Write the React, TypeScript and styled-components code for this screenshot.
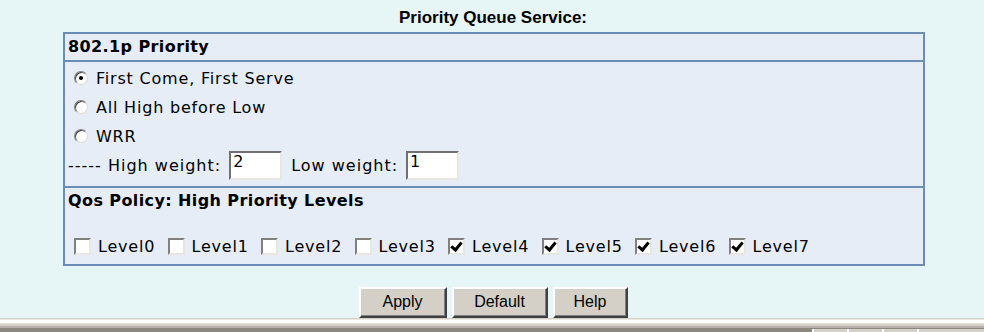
import React from 'react';
import styled, { createGlobalStyle } from 'styled-components';

const GlobalStyle = createGlobalStyle`
    html, body {
        margin: 0;
        padding: 0;
        background: #e6f5f5;
    }
    body {
        font-family: "DejaVu Sans", Verdana, sans-serif;
        font-size: 16px;
        letter-spacing: 0.8px;
        color: #000;
    }
`;

const Page = styled.div`
    width: 984px;
    height: 332px;
    display: flex;
    flex-direction: column;
    overflow: hidden;
`;

const Title = styled.div`
    font-family: "Liberation Sans", Arial, sans-serif;
    font-weight: bold;
    font-size: 17px;
    letter-spacing: 0;
    text-align: center;
    padding-top: 8px;
    height: 33px;
    box-sizing: border-box;
    padding-left: 2px;
`;

const Panel = styled.div`
    margin-left: 63px;
    width: 862px;
    box-sizing: border-box;
    border: 2px solid #6c8cb8;
    background: #e6edf6;
`;

const SectionHead = styled.div<{ $first?: boolean }>`
    font-weight: bold;
    letter-spacing: 0.4px;
    height: 26px;
    display: flex;
    align-items: center;
    padding-left: 3px;
    border-top: ${p => (p.$first ? 'none' : '2px solid #6c8cb8')};
    border-bottom: ${p => (p.$first ? '2px solid #6c8cb8' : 'none')};
`;

const Body = styled.div`
    padding: 2px 0 6px 0;
`;

const Row = styled.label`
    display: flex;
    align-items: center;
    height: 29px;
    padding-left: 9px;
    gap: 8px;
`;

const Radio = styled.input`
    appearance: none;
    width: 14px;
    height: 14px;
    margin: 0;
    border-radius: 50%;
    background: #fff;
    border: 1px solid;
    border-color: #808080 #e0ddd5 #e0ddd5 #808080;
    box-shadow: inset 1px 1px 0 #404040;
    position: relative;
    &:checked::after {
        content: '';
        position: absolute;
        left: 4px;
        top: 4px;
        width: 4px;
        height: 4px;
        border-radius: 50%;
        background: #000;
    }
`;

const WeightRow = styled.div`
    display: flex;
    align-items: center;
    height: 29px;
    padding-left: 3px;
    letter-spacing: 1px;
`;

const WeightBox = styled.input<{ $after: number }>`
    flex: none;
    width: 53px;
    height: 29px;
    box-sizing: border-box;
    margin: 0 ${p => p.$after}px 0 8px;
    padding: 0 0 7px 2px;
    font-family: "DejaVu Sans", Verdana, sans-serif;
    font-size: 16px;
    background: #fff;
    border: 2px solid;
    border-color: #707070 #e8e6e0 #e8e6e0 #707070;
    outline: none;
`;

const LevelRow = styled.div`
    display: flex;
    align-items: center;
    height: 26px;
    padding: 20px 0 4px 9px;
`;

const Level = styled.label`
    display: flex;
    align-items: center;
    gap: 7px;
    width: 93.5px;
`;

const Check = styled.input`
    appearance: none;
    width: 17px;
    height: 17px;
    margin: 0;
    background: #fff;
    border: 2px solid;
    border-color: #808080 #e8e6e0 #e8e6e0 #808080;
    box-sizing: border-box;
    position: relative;
    &:checked::after {
        content: '';
        position: absolute;
        left: 3px;
        top: 0px;
        width: 4px;
        height: 8px;
        border: solid #000;
        border-width: 0 3px 3px 0;
        transform: rotate(40deg);
    }
`;

const Buttons = styled.div`
    display: flex;
    justify-content: center;
    gap: 5px;
    margin-top: 21px;
    padding-left: 2px;
`;

const Button = styled.button<{ $w: number }>`
    width: ${p => p.$w}px;
    height: 31px;
    font-family: "Liberation Sans", Arial, sans-serif;
    font-size: 16px;
    color: #000;
    background: #d4d0c8;
    border: 2px solid;
    border-color: #ffffff #404040 #404040 #ffffff;
    box-shadow: inset -1px -1px 0 #808080;
    padding: 0;
`;

const StatusBar = styled.div`
    margin-top: auto;
    height: 14px;
    border-top: 1px solid #d4d0c8;
    background: linear-gradient(#ece9e0 0 1px, #ffffff 1px 4px, #e4e1d9 4px 5px, #d4d0c8 5px 7px, #b4b0a8 7px 9px, #8c8880 9px);
    display: flex;
    justify-content: flex-end;
`;

const StatusCell = styled.div<{ $w: number }>`
    width: ${p => p.$w}px;
    margin-top: 10px;
    border-left: 2px solid #ffffff;
    background: #d4d0c8;
`;

const levels = [false, false, false, false, true, true, true, true];

export default function App() {
    return (
        <Page>
            <GlobalStyle />
            <Title>Priority Queue Service:</Title>
            <Panel>
                <SectionHead $first>802.1p Priority</SectionHead>
                <Body>
                    <Row>
                        <Radio type="radio" name="pq" defaultChecked />
                        First Come, First Serve
                    </Row>
                    <Row>
                        <Radio type="radio" name="pq" />
                        All High before Low
                    </Row>
                    <Row>
                        <Radio type="radio" name="pq" />
                        WRR
                    </Row>
                    <WeightRow>
                        ----- High weight:
                        <WeightBox $after={9} defaultValue="2" />
                        Low weight:
                        <WeightBox $after={0} defaultValue="1" />
                    </WeightRow>
                </Body>
                <SectionHead>Qos Policy: High Priority Levels</SectionHead>
                <LevelRow>
                    {levels.map((on, i) => (
                        <Level key={i}>
                            <Check type="checkbox" defaultChecked={on} />
                            Level{i}
                        </Level>
                    ))}
                </LevelRow>
            </Panel>
            <Buttons>
                <Button $w={88}>Apply</Button>
                <Button $w={96}>Default</Button>
                <Button $w={75}>Help</Button>
            </Buttons>
            <StatusBar>
                <StatusCell $w={33} />
                <StatusCell $w={33} />
                <StatusCell $w={33} />
                <StatusCell $w={65} />
            </StatusBar>
        </Page>
    );
}
